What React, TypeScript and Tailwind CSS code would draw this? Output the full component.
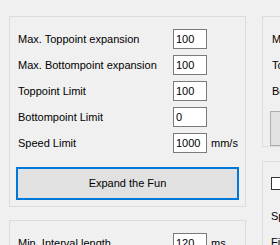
import React from 'react'

const font = { fontFamily: '"Liberation Sans", Arial, sans-serif' }

const TextBox = ({ value }: { value: string }) => (
    <div className='w-[34px] h-[20px] shrink-0 bg-white border border-[#7a7a7a] flex items-center pl-[2px] pt-[1px] text-[11px] leading-none text-black'>
        {value}
    </div>
)

const Row = ({ label, value, unit }: { label: string, value: string, unit?: string }) => (
    <div className='h-[20px] flex items-center whitespace-nowrap'>
        <div className='w-[155px] shrink-0 pt-[1px] text-[11px] leading-none text-black'>{label}</div>
        <TextBox value={value} />
        {unit && <div className='ml-[4px] pt-[1px] text-[11px] leading-none text-black'>{unit}</div>}
    </div>
)

const App = () => {
    return (
        <div className='w-[280px] h-[245px] overflow-hidden bg-[#f0f0f0] flex gap-[16px] pl-[9px] pt-[16px]' style={font}>
            <div className='w-[237px] shrink-0 flex flex-col gap-[13px]'>
                <div className='border border-[#dcdcdc] pt-[12px] pb-[6px] px-[8px] flex flex-col'>
                    <div className='flex flex-col gap-[6px]'>
                        <Row label='Max. Toppoint expansion' value='100' />
                        <Row label='Max. Bottompoint expansion' value='100' />
                        <Row label='Toppoint Limit' value='100' />
                        <Row label='Bottompoint Limit' value='0' />
                        <Row label='Speed Limit' value='1000' unit='mm/s' />
                    </div>
                    <button className='mt-[14px] mx-[-2px] h-[33px] bg-[#e1e1e1] border-2 border-[#0078d7] text-[11px] text-black'>
                        Expand the Fun
                    </button>
                </div>
                <div className='border border-[#dcdcdc] pt-[12px] px-[8px] h-[60px]'>
                    <Row label='Min. Interval length' value='120' unit='ms' />
                </div>
            </div>
            <div className='w-[120px] shrink-0 flex flex-col gap-[14px]'>
                <div className='h-[131px] border border-[#dcdcdc] pt-[12px] px-[9px] flex flex-col gap-[6px] whitespace-nowrap'>
                    <div className='h-[20px] flex items-center pt-[1px] text-[11px] leading-none text-black'>Min. Value</div>
                    <div className='h-[20px] flex items-center pt-[1px] text-[11px] leading-none text-black'>Toppoint</div>
                    <div className='h-[20px] flex items-center pt-[1px] text-[11px] leading-none text-black'>Bottompoint</div>
                    <div className='mt-[4px] -ml-[2px] h-[35px] bg-[#e1e1e1] border border-[#adadad]'></div>
                </div>
                <div className='h-[90px] border border-[#dcdcdc] pt-[15px] px-[8px] flex flex-col whitespace-nowrap'>
                    <div className='w-[13px] h-[13px] bg-white border border-[#333333]'></div>
                    <div className='mt-[21px] text-[11px] leading-none text-black'>Speed</div>
                    <div className='mt-[15px] text-[11px] leading-none text-black'>Filter</div>
                </div>
            </div>
        </div>
    )
}

export default App
